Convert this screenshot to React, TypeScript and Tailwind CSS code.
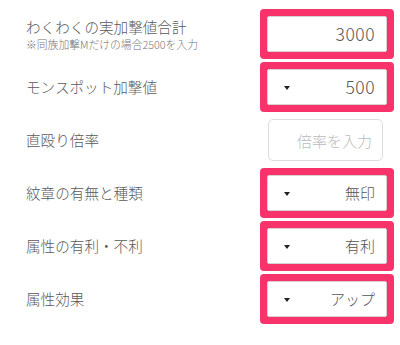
import React from 'react';

type Row =
  | { kind: 'input'; label: string; sub?: string; value: string }
  | { kind: 'select'; label: string; value: string }
  | { kind: 'plain'; label: string; placeholder: string };

const ROWS: Row[] = [
  { kind: 'input', label: 'わくわくの実加撃値合計', sub: '※同族加撃Mだけの場合2500を入力', value: '3000' },
  { kind: 'select', label: 'モンスポット加撃値', value: '500' },
  { kind: 'plain', label: '直殴り倍率', placeholder: '倍率を入力' },
  { kind: 'select', label: '紋章の有無と種類', value: '無印' },
  { kind: 'select', label: '属性の有利・不利', value: '有利' },
  { kind: 'select', label: '属性効果', value: 'アップ' },
];

const font = { fontFamily: '"Noto Sans CJK JP", "Noto Sans", sans-serif' };

function Caret() {
  return <span className="mt-[1px] h-0 w-0 border-x-[3.5px] border-t-[4px] border-x-transparent border-t-[#222]" />;
}

function Control({ row }: { row: Row }) {
  if (row.kind === 'plain') {
    return (
      <div className="flex h-[50px] w-[134px] items-center pl-[8px]">
        <input
          readOnly
          placeholder={row.placeholder}
          className="h-[42px] w-[115px] rounded-[5px] border border-[#dddddd] bg-white pr-[10px] text-right text-[15px] font-light text-[#555] outline-none placeholder:text-[#bbbbbb]"
          style={font}
        />
      </div>
    );
  }
  return (
    <div className="h-[50px] w-[134px] rounded-[4px] bg-[#f8336b] p-[7px]">
      <div className="flex h-full w-full items-center justify-between rounded-[2px] border border-[#d8d0d3] bg-white pl-[16px] pr-[11px]">
        {row.kind === 'select' ? <Caret /> : <span />}
        <span
          className={`font-light text-[#555] ${/^\d+$/.test(row.value) ? 'text-[17.5px] tracking-[0.5px]' : 'text-[15px]'}`}
        >
          {row.value}
        </span>
      </div>
    </div>
  );
}

export default function App() {
  return (
    <div className="min-h-[345px] w-[400px] bg-white pt-[9px]" style={font}>
      <div className="flex flex-col gap-[3px]">
        {ROWS.map((row) => (
          <div key={row.label} className="flex h-[50px] items-center justify-between pl-[26px] pr-[6px]">
            <div className="flex flex-col">
              <span className="text-[14.6px] font-light leading-[20px] text-[#5a5a5a]">{row.label}</span>
              {row.kind === 'input' && row.sub ? (
                <span className="text-[10.8px] font-light leading-[14px] text-[#777]">{row.sub}</span>
              ) : null}
            </div>
            <Control row={row} />
          </div>
        ))}
      </div>
    </div>
  );
}
